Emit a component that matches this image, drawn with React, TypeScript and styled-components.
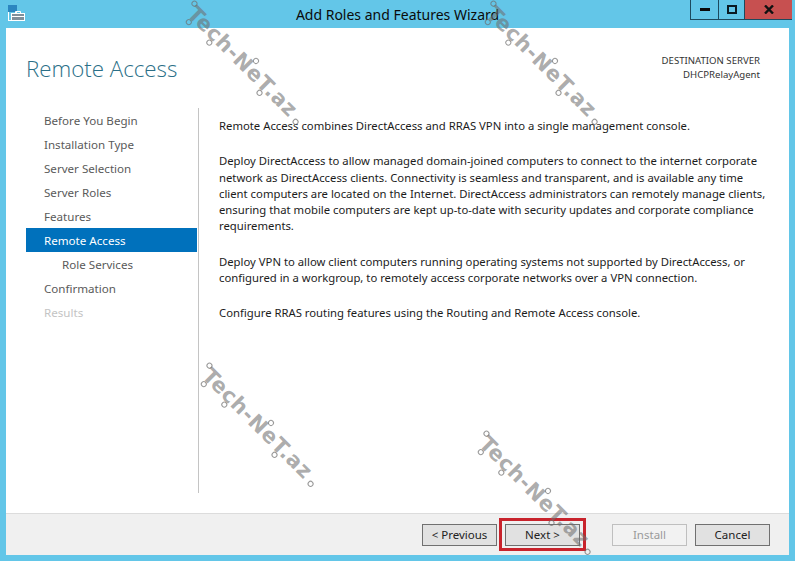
import React from 'react';
import styled, { createGlobalStyle } from 'styled-components';

const GlobalStyle = createGlobalStyle`
  html, body {
    margin: 0;
    padding: 0;
    background: #63c6e8;
  }
  body {
    font-family: "Noto Sans", "Open Sans", sans-serif;
    font-size: 12px;
  }
`;

const Window = styled.div`
  position: relative;
  width: 795px;
  height: 561px;
  overflow: hidden;
  display: flex;
  flex-direction: column;
  background: #63c6e8;
  padding: 0 6px 6px;
  box-sizing: border-box;
`;

const TitleBar = styled.div`
  position: relative;
  height: 28px;
  flex: none;
  display: flex;
  align-items: flex-start;
  justify-content: center;
`;

const AppIcon = styled.svg`
  position: absolute;
  left: 2px;
  top: 5px;
`;

const Title = styled.div`
  font-size: 14px;
  line-height: 29px;
  color: #0b0b0b;
`;

const Controls = styled.div`
  position: absolute;
  right: -3px;
  top: 0;
  display: flex;
  height: 19px;
  border-left: 1px solid #1d4a5e;
  border-bottom: 1px solid #1d4a5e;
`;

const ControlButton = styled.div<{ $w: number; $close?: boolean }>`
  width: ${p => p.$w}px;
  display: flex;
  align-items: center;
  justify-content: center;
  background: ${p => (p.$close ? '#c75050' : 'transparent')};
  border-right: ${p => (p.$close ? 'none' : '1px solid #1d4a5e')};
`;

const Client = styled.div`
  flex: 1;
  display: flex;
  flex-direction: column;
  background: #fff;
  min-height: 0;
`;

const Header = styled.div`
  height: 80px;
  flex: none;
  display: flex;
  justify-content: space-between;
  padding: 0 29px 0 20px;
`;

const PageTitle = styled.h1`
  margin: 24px 0 0;
  font-weight: 300;
  font-size: 22.3px;
  line-height: 34px;
  color: #2b6f87;
  font-family: "Open Sans", "Noto Sans", sans-serif;
`;

const Destination = styled.div`
  margin-top: 26px;
  text-align: right;
  font-size: 9.6px;
  line-height: 13.5px;
  color: #333;
`;

const Body = styled.div`
  flex: 1;
  display: flex;
  min-height: 0;
`;

const Nav = styled.nav`
  width: 171px;
  margin-left: 20px;
  margin-right: 1px;
  flex: none;
`;

const NavItem = styled.div<{ $active?: boolean; $disabled?: boolean; $sub?: boolean }>`
  height: 24px;
  line-height: 26px;
  padding-left: ${p => (p.$sub ? 36 : 18)}px;
  font-size: 11.6px;
  background: ${p => (p.$active ? '#0071bc' : 'transparent')};
  color: ${p => (p.$active ? '#fff' : p.$disabled ? '#c4c4c4' : '#5a5a5a')};
`;

const Content = styled.div`
  flex: 1;
  margin-bottom: 20px;
  border-left: 1px solid #c4c4c4;
  padding: 10px 0 0 20px;
`;

const Paragraph = styled.p`
  margin: 0 0 19px;
  font-size: 11.3px;
  line-height: 16.25px;
  color: #1c1c1c;
  white-space: nowrap;
`;

const Footer = styled.div`
  height: 41px;
  flex: none;
  display: flex;
  align-items: center;
  justify-content: flex-end;
  gap: 8px;
  padding: 0 19px 0 0;
  background: #f0f0f0;
  border-top: 1px solid #dcdcdc;
`;

const Button = styled.div<{ $disabled?: boolean; $gapLeft?: number }>`
  position: relative;
  width: 75px;
  height: 22px;
  box-sizing: border-box;
  display: flex;
  align-items: center;
  justify-content: center;
  font-size: 11.5px;
  margin-left: ${p => p.$gapLeft || 0}px;
  background: ${p => (p.$disabled ? '#f2f2f2' : '#e1e1e1')};
  border: 1px solid ${p => (p.$disabled ? '#bfbfbf' : '#707070')};
  color: ${p => (p.$disabled ? '#9a9a9a' : '#222')};
`;

const Highlight = styled.div`
  position: absolute;
  left: -7px;
  top: -7px;
  right: -7px;
  bottom: -6px;
  border: 3px solid #c8232c;
  box-sizing: border-box;
`;

const Watermark = styled.div<{ $x: number; $y: number }>`
  position: absolute;
  left: ${p => p.$x}px;
  top: ${p => p.$y}px;
  transform: rotate(45deg);
  transform-origin: 0 0;
  font-family: "DejaVu Sans", sans-serif;
  font-weight: 700;
  font-size: 21px;
  line-height: 20px;
  letter-spacing: 0.6px;
  color: rgba(110, 110, 110, 0.58);
  white-space: nowrap;
  pointer-events: none;
`;

const WatermarkNode = styled.span<{ $u: number; $v: number }>`
  position: absolute;
  left: ${p => p.$u - 3}px;
  top: ${p => p.$v - 3}px;
  width: 6px;
  height: 6px;
  box-sizing: border-box;
  border: 1.5px solid rgba(110, 110, 110, 0.7);
  border-radius: 50%;
`;

const navItems = [
  { label: 'Before You Begin' },
  { label: 'Installation Type' },
  { label: 'Server Selection' },
  { label: 'Server Roles' },
  { label: 'Features' },
  { label: 'Remote Access', active: true },
  { label: 'Role Services', sub: true },
  { label: 'Confirmation' },
  { label: 'Results', disabled: true },
];

const marks = [
  [198, 3],
  [497, 3],
  [213, 365],
  [490, 433],
];

// circuit dots on the logo, in the rotated logo's own coordinates
const nodes = [
  [-2, 3],
  [7, 20],
  [36, 20],
  [82, 0],
  [107, 20],
  [153, 15],
];

const App: React.FC = () => {
  return (
    <Window>
      <GlobalStyle />
      <TitleBar>
        <AppIcon width="18" height="16" viewBox="0 0 18 16" fill="none">
          <rect x="0.5" y="0.5" width="8" height="15" fill="#63c6e8" stroke="#fff" />
          <rect x="0" y="0" width="9" height="7" fill="#2b86c0" />
          <rect x="3.5" y="8.5" width="13" height="7" fill="#7f8f9a" stroke="#fff" />
          <path d="M7.5 8.5V6.5h5v2M3.5 11.5h13" stroke="#fff" />
        </AppIcon>
        <Title>Add Roles and Features Wizard</Title>
        <Controls>
          <ControlButton $w={27}>
            <svg width="10" height="3"><rect width="10" height="3" fill="#0a0a0a" /></svg>
          </ControlButton>
          <ControlButton $w={25}>
            <svg width="10" height="9"><rect x="1" y="1" width="8" height="7" fill="none" stroke="#0a1a22" strokeWidth="2" /></svg>
          </ControlButton>
          <ControlButton $w={47} $close>
            <svg width="10" height="9"><path d="M1 .5l8 8M9 .5l-8 8" stroke="#111" strokeWidth="2.4" /></svg>
          </ControlButton>
        </Controls>
      </TitleBar>
      <Client>
        <Header>
          <PageTitle>Remote Access</PageTitle>
          <Destination>
            DESTINATION SERVER
            <br />
            DHCPRelayAgent
          </Destination>
        </Header>
        <Body>
          <Nav>
            {navItems.map(item => (
              <NavItem key={item.label} $active={item.active} $sub={item.sub} $disabled={item.disabled}>
                {item.label}
              </NavItem>
            ))}
          </Nav>
          <Content>
            <Paragraph>Remote Access combines DirectAccess and RRAS VPN into a single management console.</Paragraph>
            <Paragraph>
              Deploy DirectAccess to allow managed domain-joined computers to connect to the internet corporate
              <br />
              network as DirectAccess clients. Connectivity is seamless and transparent, and is available any time
              <br />
              client computers are located on the Internet. DirectAccess administrators can remotely manage clients,
              <br />
              ensuring that mobile computers are kept up-to-date with security updates and corporate compliance
              <br />
              requirements.
            </Paragraph>
            <Paragraph>
              Deploy VPN to allow client computers running operating systems not supported by DirectAccess, or
              <br />
              configured in a workgroup, to remotely access corporate networks over a VPN connection.
            </Paragraph>
            <Paragraph>Configure RRAS routing features using the Routing and Remote Access console.</Paragraph>
          </Content>
        </Body>
        <Footer>
          <Button>&lt; Previous</Button>
          <Button>
            Next &gt;
            <Highlight />
          </Button>
          <Button $disabled $gapLeft={24}>Install</Button>
          <Button>Cancel</Button>
        </Footer>
      </Client>
      {marks.map(([x, y]) => (
        <Watermark key={`${x}-${y}`} $x={x} $y={y}>
          Tech-NeT.az
          {nodes.map(([u, v]) => (
            <WatermarkNode key={`${u}-${v}`} $u={u} $v={v} />
          ))}
        </Watermark>
      ))}
    </Window>
  );
};

export default App;
